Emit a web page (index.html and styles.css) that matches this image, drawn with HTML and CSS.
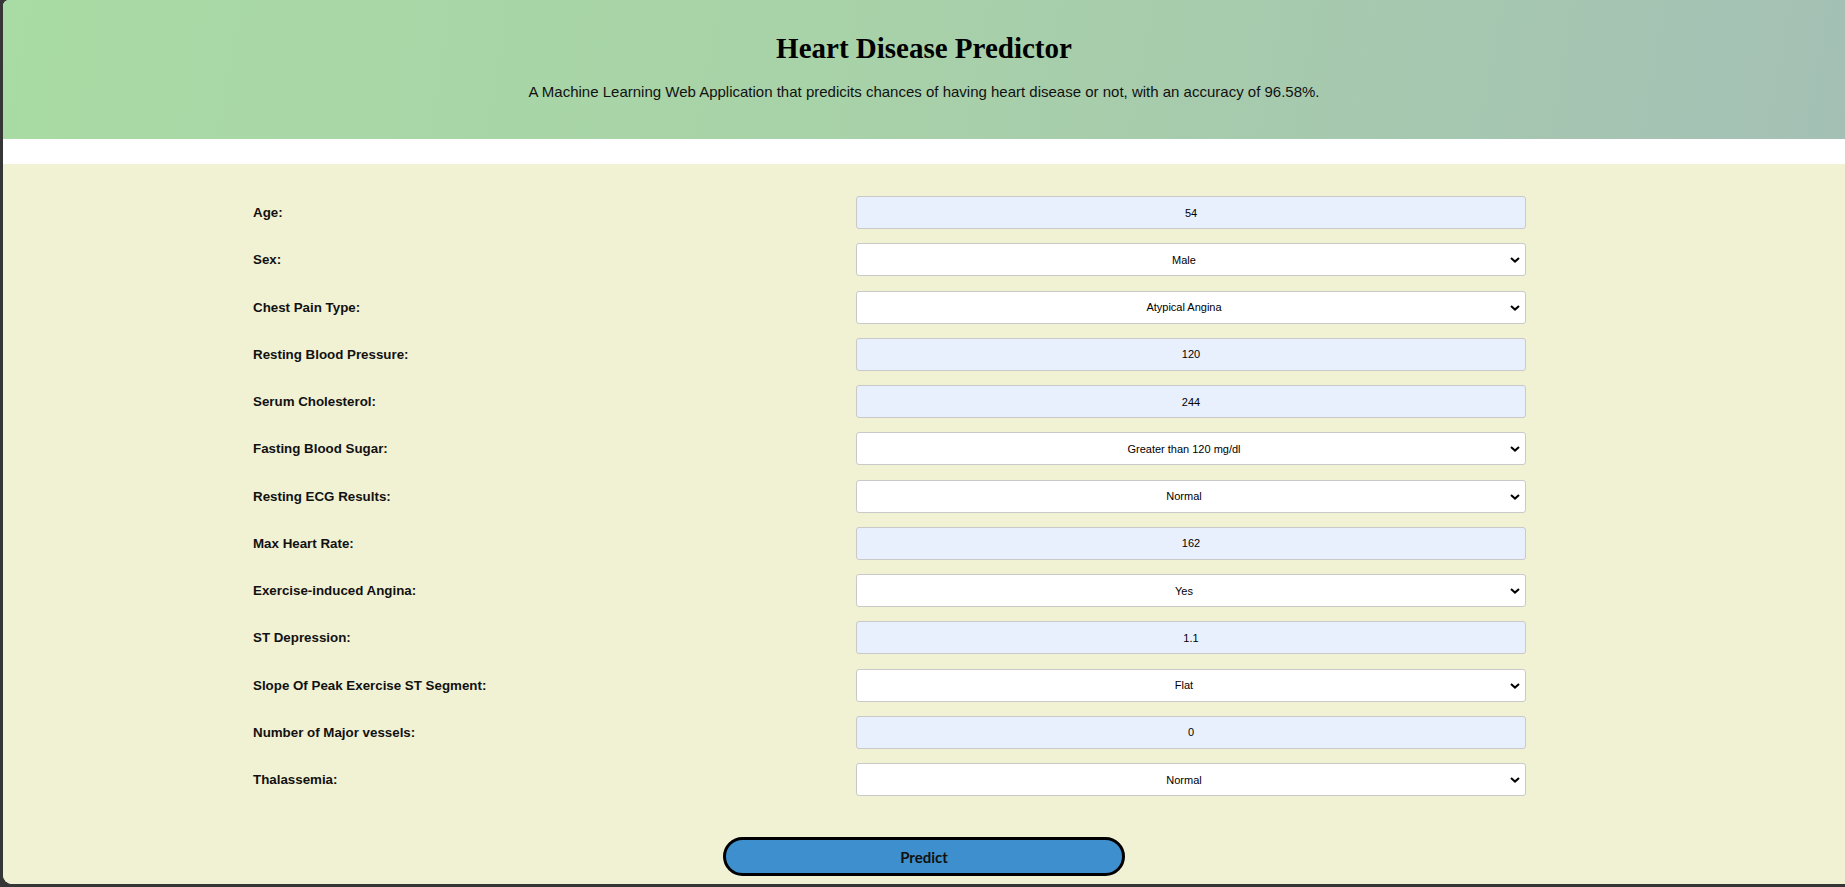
FILE: index.html
```html
<!DOCTYPE html>
<html lang="en">
<head>
<meta charset="utf-8">
<title>Heart Disease Predictor</title>
<link rel="stylesheet" href="styles.css">
</head>
<body>
<div class="window">
  <header class="hero">
    <h1 class="hero-title">Heart Disease Predictor</h1>
    <p class="hero-sub">A Machine Learning Web Application that predicits chances of having heart disease or not, with an accuracy of 96.58%.</p>
  </header>
  <main class="main">
    <form class="form">
      <div class="grid">
        <label class="lbl">Age:</label>
        <input class="field auto" type="text" value="54">

        <label class="lbl">Sex:</label>
        <div class="sel"><select class="field"><option>Male</option><option>Female</option></select><svg class="chev" viewBox="0 0 10 6" width="10" height="6"><path d="M1 1l4 3.6L9 1" fill="none" stroke="#000" stroke-width="2"/></svg></div>

        <label class="lbl">Chest Pain Type:</label>
        <div class="sel"><select class="field"><option>Atypical Angina</option></select><svg class="chev" viewBox="0 0 10 6" width="10" height="6"><path d="M1 1l4 3.6L9 1" fill="none" stroke="#000" stroke-width="2"/></svg></div>

        <label class="lbl">Resting Blood Pressure:</label>
        <input class="field auto" type="text" value="120">

        <label class="lbl">Serum Cholesterol:</label>
        <input class="field auto" type="text" value="244">

        <label class="lbl">Fasting Blood Sugar:</label>
        <div class="sel"><select class="field"><option>Greater than 120 mg/dl</option></select><svg class="chev" viewBox="0 0 10 6" width="10" height="6"><path d="M1 1l4 3.6L9 1" fill="none" stroke="#000" stroke-width="2"/></svg></div>

        <label class="lbl">Resting ECG Results:</label>
        <div class="sel"><select class="field"><option>Normal</option></select><svg class="chev" viewBox="0 0 10 6" width="10" height="6"><path d="M1 1l4 3.6L9 1" fill="none" stroke="#000" stroke-width="2"/></svg></div>

        <label class="lbl">Max Heart Rate:</label>
        <input class="field auto" type="text" value="162">

        <label class="lbl">Exercise-induced Angina:</label>
        <div class="sel"><select class="field"><option>Yes</option></select><svg class="chev" viewBox="0 0 10 6" width="10" height="6"><path d="M1 1l4 3.6L9 1" fill="none" stroke="#000" stroke-width="2"/></svg></div>

        <label class="lbl">ST Depression:</label>
        <input class="field auto" type="text" value="1.1">

        <label class="lbl">Slope Of Peak Exercise ST Segment:</label>
        <div class="sel"><select class="field"><option>Flat</option></select><svg class="chev" viewBox="0 0 10 6" width="10" height="6"><path d="M1 1l4 3.6L9 1" fill="none" stroke="#000" stroke-width="2"/></svg></div>

        <label class="lbl">Number of Major vessels:</label>
        <input class="field auto" type="text" value="0">

        <label class="lbl">Thalassemia:</label>
        <div class="sel"><select class="field"><option>Normal</option></select><svg class="chev" viewBox="0 0 10 6" width="10" height="6"><path d="M1 1l4 3.6L9 1" fill="none" stroke="#000" stroke-width="2"/></svg></div>
      </div>
      <div class="actions">
        <button class="btn" type="button">Predict</button>
      </div>
    </form>
  </main>
</div>
</body>
</html>
```

FILE: styles.css
```css
html, body {
  margin: 0;
  padding: 0;
  height: 100%;
}
body {
  background: #363636;
  overflow: hidden;
}
.window {
  margin-left: 3px;
  height: 884px;
  background: #ffffff;
  border-radius: 6px 0 0 9px;
  overflow: hidden;
  display: flex;
  flex-direction: column;
}
.hero {
  height: 139px;
  box-sizing: border-box;
  padding-top: 32px;
  background: linear-gradient(100deg, #a9dba4 0%, #a8d2a8 45%, #a4c0b5 100%);
  text-align: center;
  flex: none;
}
.hero-title {
  margin: 0;
  font-family: "Liberation Serif", "Times New Roman", serif;
  font-weight: bold;
  font-size: 29px;
  line-height: 33px;
  color: #000;
}
.hero-sub {
  margin: 18px 0 0;
  font-family: "Liberation Sans", Arial, sans-serif;
  font-size: 15px;
  line-height: 18px;
  color: #111;
}
.main {
  margin-top: 25px;
  flex: 1;
  background: #f1f2d4;
  padding-top: 32px;
}
.form {
  padding-left: 250px;
}
.grid {
  display: grid;
  grid-template-columns: 603px 670px;
  row-gap: 14.25px;
  align-items: center;
}
.lbl {
  font-family: "Liberation Sans", Arial, sans-serif;
  font-weight: bold;
  font-size: 13.33px;
  color: #111;
}
.field {
  box-sizing: border-box;
  width: 670px;
  height: 33px;
  margin: 0;
  border: 1px solid #c9c9c9;
  border-radius: 3px;
  background: #ffffff;
  font-family: "Liberation Sans", Arial, sans-serif;
  font-size: 11px;
  color: #000;
  text-align: center;
  text-align-last: center;
  padding: 0 8px;
  outline: none;
}
.auto {
  background: #e8f0fe;
}
.sel {
  position: relative;
  width: 670px;
  height: 33px;
}
.sel select {
  appearance: none;
  -webkit-appearance: none;
  display: block;
  padding: 0 22px 0 8px;
}
.chev {
  position: absolute;
  right: 6px;
  top: 14px;
  pointer-events: none;
}
.actions {
  margin-top: 41px;
  margin-left: -250px;
  display: flex;
  justify-content: center;
}
.btn {
  width: 402px;
  height: 39px;
  border: 3px solid #000;
  border-radius: 20px;
  background: #3e8fcd;
  font-family: Lato, "Open Sans", sans-serif;
  font-weight: bold;
  font-size: 15px;
  color: #111;
  cursor: pointer;
}
```
